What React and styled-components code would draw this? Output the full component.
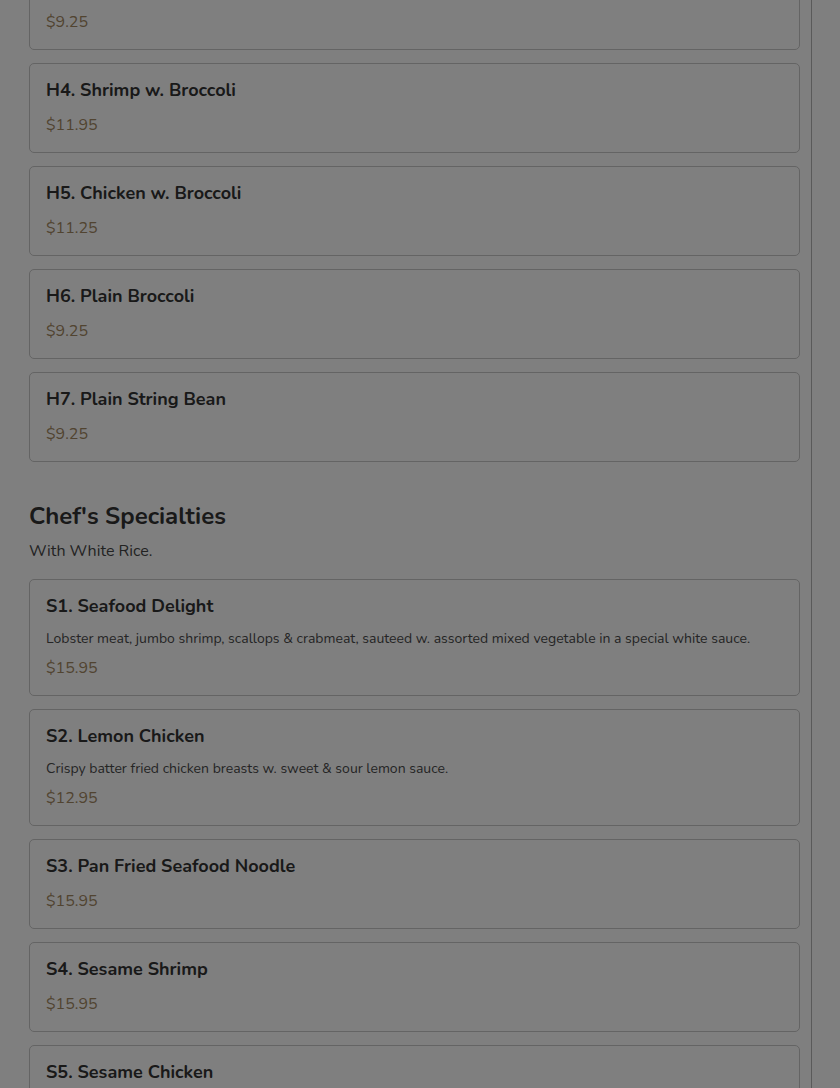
import React from 'react';
import styled, { createGlobalStyle } from 'styled-components';

const GlobalStyle = createGlobalStyle`
    html, body {
        margin: 0;
        padding: 0;
        background: #fff;
        font-family: "Nunito", "Lato", "Open Sans", sans-serif;
        color: #383838;
    }
    * { box-sizing: border-box; }
`;

const broccoli = [
    { name: 'H3. Mixed Vegetable', price: '9.25' },
    { name: 'H4. Shrimp w. Broccoli', price: '11.95' },
    { name: 'H5. Chicken w. Broccoli', price: '11.25' },
    { name: 'H6. Plain Broccoli', price: '9.25' },
    { name: 'H7. Plain String Bean', price: '9.25' },
];

const specialties = [
    {
        name: 'S1. Seafood Delight',
        desc: 'Lobster meat, jumbo shrimp, scallops & crabmeat, sauteed w. assorted mixed vegetable in a special white sauce.',
        price: '15.95',
    },
    { name: 'S2. Lemon Chicken', desc: 'Crispy batter fried chicken breasts w. sweet & sour lemon sauce.', price: '12.95' },
    { name: 'S3. Pan Fried Seafood Noodle', price: '15.95' },
    { name: 'S4. Sesame Shrimp', price: '15.95' },
    { name: 'S5. Sesame Chicken', price: '15.95' },
];

const MenuItem = ({ item }) => (
    <Card>
        <ItemName>{item.name}</ItemName>
        {item.desc && <ItemDesc>{item.desc}</ItemDesc>}
        <Price>${item.price}</Price>
    </Card>
);

export default function App() {
    return (
        <>
            <GlobalStyle />
            <Page>
                <Main>
                    <ItemList className="scrolled">
                        {broccoli.map((it) => <MenuItem key={it.name} item={it} />)}
                    </ItemList>
                    <Section>
                        <SectionTitle>Chef's Specialties</SectionTitle>
                        <SectionNote>With White Rice.</SectionNote>
                        <ItemList>
                            {specialties.map((it) => <MenuItem key={it.name} item={it} />)}
                        </ItemList>
                    </Section>
                </Main>
            </Page>
            <Backdrop />
        </>
    );
}

const Page = styled.div`
    height: 1088px;
    overflow: hidden;
    display: flex;
`;

const Main = styled.main`
    width: 812px;
    border-right: 1px solid #b4b4b4;
    padding: 0 11px 0 29px;
`;

const ItemList = styled.div`
    display: flex;
    flex-direction: column;
    gap: 13px;
    &.scrolled {
        margin-top: -40px;
    }
`;

const Card = styled.div`
    border: 1px solid #c8c8c8;
    border-radius: 5px;
    padding: 15px 16px;
    background: #fff;
`;

const ItemName = styled.h3`
    margin: 0 0 12px;
    font-size: 18px;
    line-height: 22px;
    font-weight: 700;
    color: #333;
`;

const ItemDesc = styled.p`
    margin: 0 0 8px;
    font-size: 14px;
    line-height: 19px;
    color: #4a4a4a;
`;

const Price = styled.div`
    font-size: 16px;
    line-height: 24px;
    color: #a38862;
`;

const Section = styled.section`
    margin-top: 39px;
`;

const SectionTitle = styled.h2`
    margin: 0 0 7px;
    font-size: 24px;
    line-height: 31px;
    font-weight: 700;
    color: #333;
`;

const SectionNote = styled.p`
    margin: 0 0 16px;
    font-size: 16px;
    line-height: 24px;
    color: #454545;
`;

const Backdrop = styled.div`
    position: fixed;
    inset: 0;
    background: rgba(0, 0, 0, 0.5);
`;
